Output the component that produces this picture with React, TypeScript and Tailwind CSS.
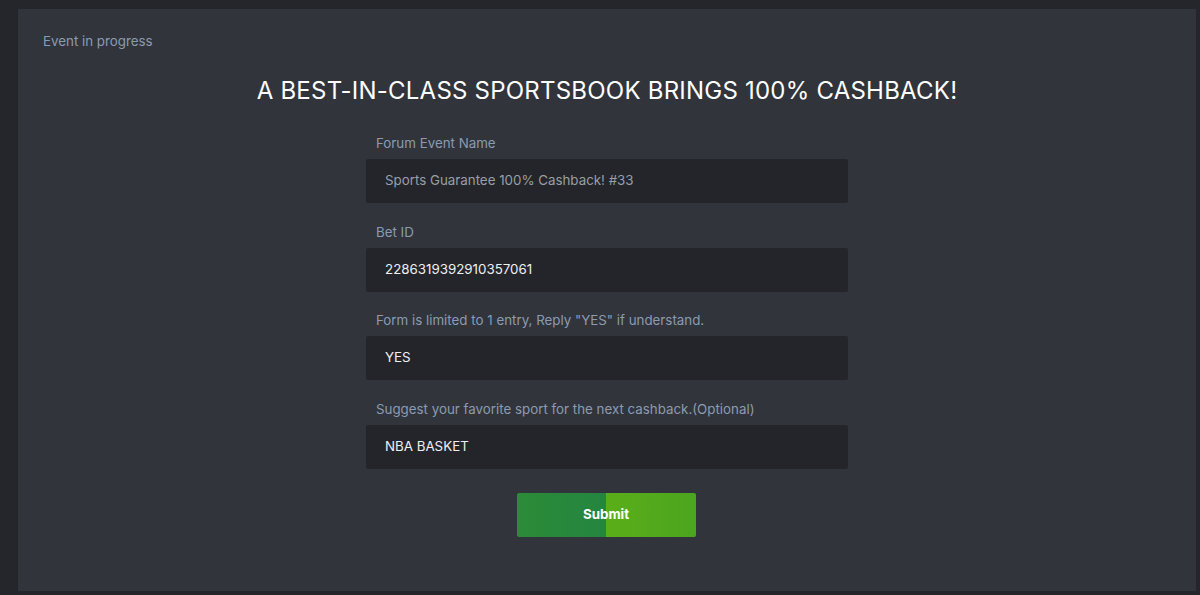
import React from "react";

const fields = [
  { label: "Forum Event Name", value: "Sports Guarantee 100% Cashback! #33", muted: true },
  { label: "Bet ID", value: "2286319392910357061", muted: false },
  { label: 'Form is limited to 1 entry, Reply "YES" if understand.', value: "YES", muted: false },
  { label: "Suggest your favorite sport for the next cashback.(Optional)", value: "NBA BASKET", muted: false },
];

export default function App() {
  return (
    <div
      className="w-[1200px] h-[595px] bg-[#25262b] pt-[9px] pl-[18px] pr-[4px] overflow-hidden"
      style={{ fontFamily: "Inter, 'Noto Sans', sans-serif" }}
    >
      <div className="bg-[#31343b] h-[582px] px-[25px] pt-[23px] pb-[54px] flex flex-col">
        <div className="text-[13.33px] leading-[18px] text-[#8c9bb0]">Event in progress</div>
        <h1 className="mt-[25px] text-center text-[24px] leading-[32px] tracking-[0.22px] text-white font-normal">
          A BEST-IN-CLASS SPORTSBOOK BRINGS 100% CASHBACK!
        </h1>
        <div className="mt-[27px] w-[482px] ml-[323px] flex flex-col gap-[19.7px]">
          {fields.map((f) => (
            <div key={f.label} className="flex flex-col">
              <label className="pl-[10px] text-[13.33px] leading-[18px] text-[#8c9bb0] mb-[7px]">{f.label}</label>
              <div
                className={`h-[44px] bg-[#24252a] rounded-[2px] pl-[19px] flex items-center text-[13.33px] ${
                  f.muted ? "text-[#9a9ea6]" : "text-[#eef0f3]"
                }`}
              >
                {f.value}
              </div>
            </div>
          ))}
        </div>
        <div className="mt-[24px] flex justify-center pr-[2px]">
          <button
            className="w-[179px] h-[44px] rounded-[2px] text-white font-bold text-[13.33px]"
            style={{
              background:
                "linear-gradient(to right, #2b8b37 0%, #248540 50%, #5aae18 50%, #4ba51f 100%)",
            }}
          >
            Submit
          </button>
        </div>
      </div>
    </div>
  );
}
